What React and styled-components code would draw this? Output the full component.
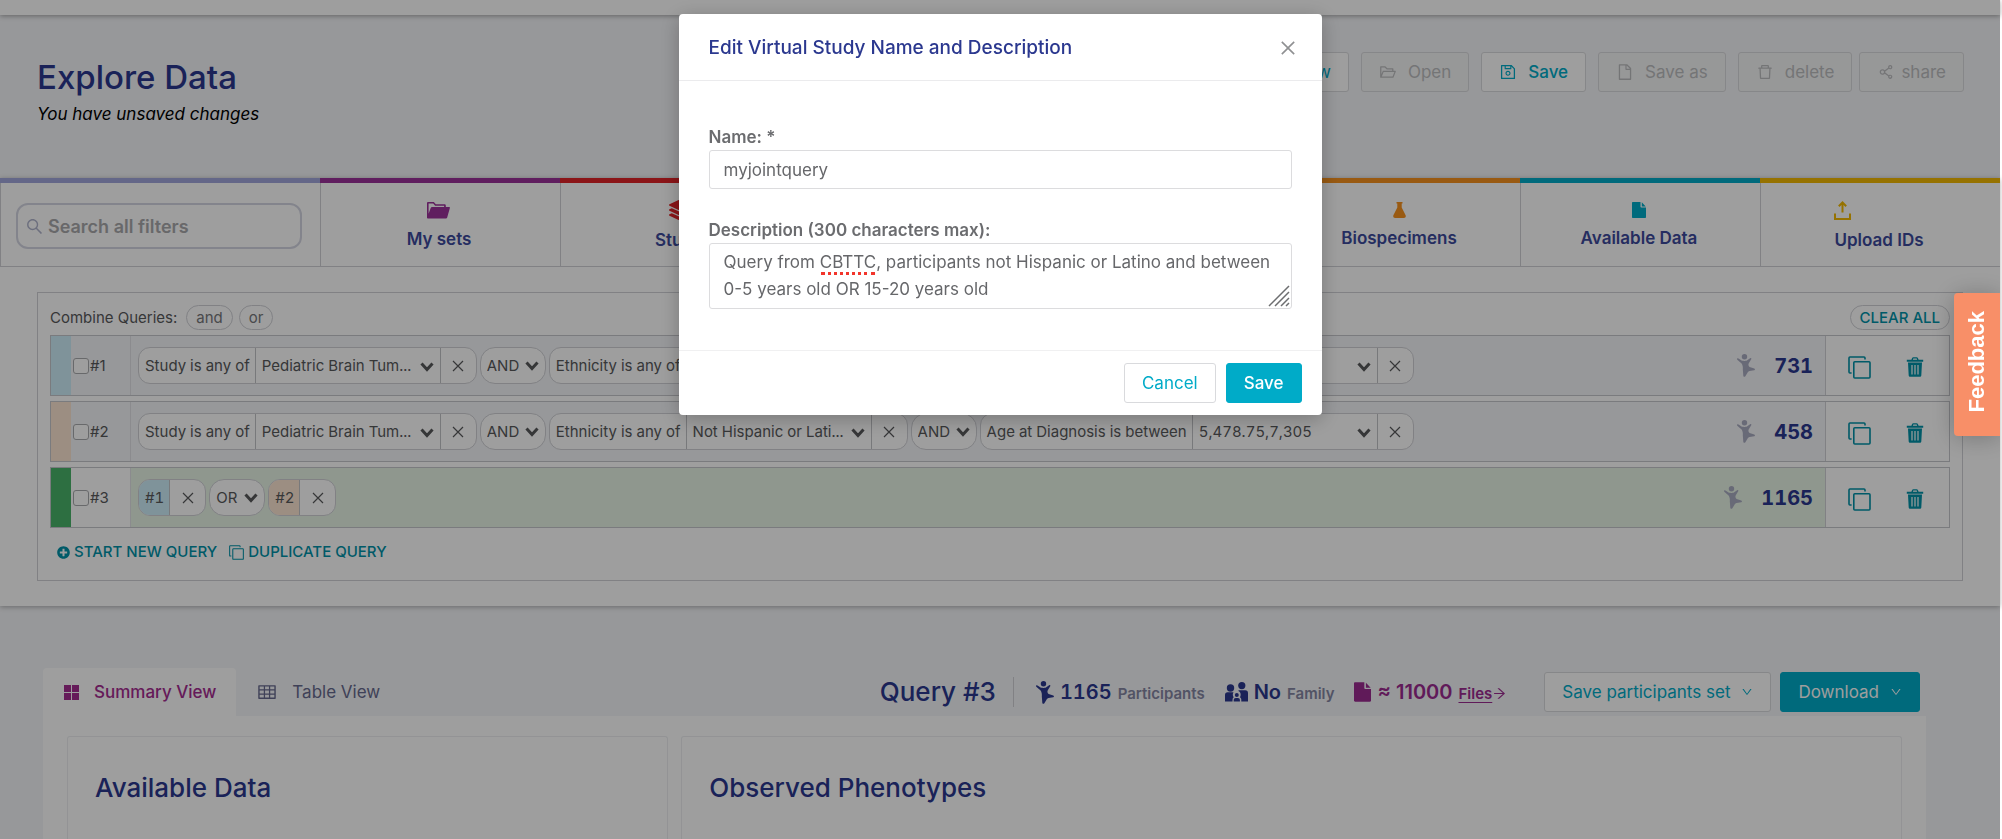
import React from "react";
import styled, { createGlobalStyle, css } from "styled-components";
import {
  AiOutlineFolderOpen,
  AiOutlineSave,
  AiOutlineFile,
  AiOutlineDelete,
  AiOutlineShareAlt,
  AiOutlineTable,
  AiOutlineArrowRight,
  AiOutlineDown,
  AiOutlineClose,
  AiOutlineSearch,
  AiOutlineFileAdd,
} from "react-icons/ai";
import { FaLayerGroup, FaPlusCircle, FaUser, FaHeartbeat } from "react-icons/fa";

const c = {
  navy: "#2b388f",
  teal: "#00abc8",
  tealDark: "#0092a8",
  purple: "#a42c90",
  bg: "#f4f5f8",
  line: "#d0d1d6",
  text: "#58595b",
};

const Global = createGlobalStyle`
  * { box-sizing: border-box; }
  body { margin: 0; background: #fff; font-family: Inter, "Liberation Sans", sans-serif; color: ${c.text}; }
  button, input, select, textarea { font: inherit; color: inherit; }
  h1, h2, h3, p { margin: 0; }
  svg { display: block; flex: none; }
`;

const Page = styled.div`
  min-height: 100vh;
  margin-right: 2px;
  background: ${c.bg};
  display: flex;
  flex-direction: column;
`;

const TopBar = styled.div`
  height: 15px;
  background: #fff;
  box-shadow: 0 1px 5px rgba(0, 0, 0, 0.35);
`;

const Header = styled.header`
  display: flex;
  justify-content: space-between;
  align-items: flex-start;
  padding: 37px 36px 0 37px;
  height: 163px;
`;

const PageTitle = styled.h1`
  font-size: 33px;
  line-height: 40px;
  padding-top: 5px;
  font-weight: 500;
  color: ${c.navy};
`;

const Unsaved = styled.p`
  font-size: 17px;
  line-height: 24px;
  padding-top: 5px;
  font-style: italic;
  color: #000;
`;

const Toolbar = styled.div`
  display: flex;
  gap: 12px;
`;

const Button = styled.button`
  display: inline-flex;
  align-items: center;
  justify-content: center;
  gap: ${(p) => (p.$tight ? "6px" : "11px")};
  height: 40px;
  padding: 0 17px;
  border: 1px solid ${(p) => (p.$primary ? c.teal : "#d9dadd")};
  border-radius: 3px;
  background: ${(p) => (p.$primary ? c.teal : "#fff")};
  color: ${(p) => (p.$primary ? "#fff" : c.teal)};
  font-size: 17px;
  line-height: 24px;
  font-weight: ${(p) => (p.$strong ? 500 : 400)};
  white-space: nowrap;
  &:disabled {
    background: #f4f5f6;
    color: #bcbdbf;
  }
`;

const PairGroup = styled.div`
  display: flex;
  gap: 7px;
`;

const Main = styled.section`
  background: #fff;
  box-shadow: 0 1px 5px rgba(0, 0, 0, 0.3);
  padding-bottom: 25px;
`;

const FilterBar = styled.nav`
  display: grid;
  grid-template-columns: minmax(0, 4fr) repeat(7, minmax(0, 3fr));
  border-bottom: 1px solid ${c.line};
`;

const FilterCell = styled.div`
  display: flex;
  align-items: center;
  justify-content: center;
  height: 88px;
  padding: 3px 18px 0 16px;
  border-top: 5px solid ${(p) => p.$color};
  box-shadow: inset 1px 0 0 ${c.line};
`;

const FilterButton = styled.button`
  display: flex;
  flex-direction: column;
  align-items: ${(p) => (p.$start ? "flex-start" : "center")};
  gap: 8px;
  padding: 0;
  border: 0;
  background: none;
  color: #3c4a9c;
  font-size: 17px;
  line-height: 24px;
  font-weight: 600;
  white-space: nowrap;
  svg {
    color: ${(p) => p.$color};
  }
`;

const SearchBox = styled.label`
  display: flex;
  align-items: center;
  gap: 4px;
  width: 100%;
  height: 46px;
  padding: 0 7px;
  border: 2px solid #d4d6e2;
  border-radius: 12px;
  color: #b0b4cc;
`;

const SearchInput = styled.input`
  flex: 1;
  min-width: 0;
  border: 0;
  outline: 0;
  background: none;
  padding: 0;
  font-size: 18px;
  font-weight: 600;
  &::placeholder {
    color: #a9a9ab;
    opacity: 1;
  }
`;

const Builder = styled.div`
  margin: 25px 37px 0;
  border: 1px solid ${c.line};
  padding: 12px 12px 17px;
`;

const BuilderTop = styled.div`
  display: flex;
  align-items: center;
  gap: 6px;
  margin-bottom: 5px;
  font-size: 15px;
  line-height: 20px;
`;

const CombineLabel = styled.span`
  margin-right: 3px;
`;

const Pill = styled.button`
  height: 25px;
  padding: 0 9px;
  border: 1px solid ${c.line};
  border-radius: 13px;
  background: #fff;
  font-size: 15px;
  line-height: 20px;
  color: ${(p) => (p.$teal ? c.tealDark : "#77787b")};
  font-weight: ${(p) => (p.$teal ? 500 : 400)};
  margin-left: ${(p) => (p.$teal ? "auto" : "0")};
`;

const Rows = styled.div`
  display: flex;
  flex-direction: column;
  gap: 5px;
`;

const Row = styled.div`
  display: flex;
  height: 61px;
  border: 1px solid #c6c7cc;
  background: ${(p) => (p.$active ? "#e7f4e6" : c.bg)};
`;

const Strip = styled.div`
  width: 20px;
  background: ${(p) => p.$color};
`;

const RowLabel = styled.label`
  display: flex;
  align-items: center;
  gap: 1px;
  width: 60px;
  padding-left: 2px;
  border-right: 1px solid #e0e1e5;
  background: ${(p) => (p.$active ? "#fff" : "transparent")};
  font-size: 15px;
`;

const Check = styled.input`
  appearance: none;
  width: 16px;
  height: 16px;
  margin: 0;
  border: 1px solid #a9aaad;
  border-radius: 3px;
  background: #fff;
`;

const Terms = styled.div`
  flex: 1;
  display: flex;
  align-items: center;
  gap: 3px;
  padding-left: 7px;
`;

const Chip = styled.div`
  display: flex;
  height: 37px;
  border: 1px solid ${c.line};
  border-radius: 12px;
  background: #fff;
  overflow: hidden;
  font-size: 15px;
  font-variant-numeric: tabular-nums;
`;

const ChipText = styled.span`
  display: flex;
  align-items: center;
  padding: 0 5px 0 6px;
  white-space: nowrap;
  background: ${(p) => p.$color || "transparent"};
`;

const ChipValue = styled.button`
  display: flex;
  align-items: center;
  justify-content: space-between;
  width: 185px;
  padding: 0 6px;
  border: 0;
  border-left: 1px solid #c2c3c7;
  background: none;
  white-space: nowrap;
  svg {
    margin-top: 3px;
  }
`;

const ChipClose = styled.button`
  display: flex;
  align-items: center;
  justify-content: center;
  width: 36px;
  padding: 0;
  border: 0;
  border-left: 1px solid #c2c3c7;
  background: none;
`;

const Operator = styled.div`
  display: grid;
  align-items: center;
  width: ${(p) => (p.$short ? "56px" : "66px")};
  height: 37px;
  border: 1px solid ${c.line};
  border-radius: 15px;
  background: #fff;
  font-size: 15px;
  svg {
    grid-area: 1 / 1;
    justify-self: end;
    margin-right: 6px;
    pointer-events: none;
  }
`;

const OperatorSelect = styled.select`
  grid-area: 1 / 1;
  appearance: none;
  height: 100%;
  width: 100%;
  padding: 0 0 0 6px;
  border: 0;
  background: none;
`;

const Count = styled.div`
  display: flex;
  align-items: center;
  gap: 19px;
  padding-right: 12px;
  font-size: 20px;
  font-weight: 700;
  font-variant-numeric: tabular-nums;
  color: ${c.navy};
  svg {
    color: #a9abc0;
  }
`;

const Actions = styled.div`
  display: flex;
  align-items: center;
  justify-content: space-between;
  width: 124px;
  padding: 3px 25px 0 22px;
  border-left: 1px solid ${c.line};
  background: #fff;
`;

const IconButton = styled.button`
  display: flex;
  padding: 0;
  border: 0;
  background: none;
  color: ${(p) => p.$color || c.tealDark};
`;

const BuilderFoot = styled.div`
  display: flex;
  gap: 12px;
  padding: 13px 7px 0;
`;

const TextButton = styled.button`
  display: flex;
  align-items: center;
  gap: 4px;
  padding: 0;
  border: 0;
  background: none;
  color: ${c.tealDark};
  font-size: 15px;
  line-height: 22px;
  font-weight: 500;
`;

const Results = styled.section`
  flex: 1;
  display: flex;
  flex-direction: column;
  margin: 62px 74px 0 43px;
`;

const ResultsBar = styled.div`
  display: flex;
  justify-content: space-between;
  height: 48px;
`;

const Tabs = styled.div`
  display: flex;
`;

const Tab = styled.button`
  display: flex;
  align-items: center;
  gap: 15px;
  height: 48px;
  padding: 0 20px 0 21px;
  border: 0;
  border-radius: 4px 4px 0 0;
  background: ${(p) => (p.$active ? "#fff" : "transparent")};
  color: ${(p) => (p.$active ? c.purple : "#66698e")};
  font-size: 17px;
  font-weight: ${(p) => (p.$active ? 500 : 400)};
`;

const Stats = styled.div`
  display: flex;
  align-items: center;
  height: 40px;
  margin: 4px 6px 0 0;
`;

const QueryName = styled.h2`
  font-size: 26px;
  line-height: 30px;
  font-weight: 500;
  color: ${c.navy};
  padding-right: 17px;
  margin-right: 22px;
  border-right: 1px solid ${c.line};
`;

const Stat = styled.div`
  display: flex;
  align-items: baseline;
  gap: 6px;
  margin-right: ${(p) => (p.$last ? "37px" : "20px")};
  color: ${(p) => (p.$purple ? "#9b2a90" : c.navy)};
  font-size: 20px;
  font-weight: 600;
  svg {
    align-self: center;
  }
`;

const StatNumber = styled.span`
  font-variant-numeric: tabular-nums;
`;

const StatUnit = styled.span`
  font-size: 15px;
  color: #8587a3;
`;

const FilesLink = styled.a`
  display: flex;
  align-items: center;
  color: inherit;
  font-size: 15px;
  text-decoration: none;
  span {
    text-decoration: underline;
    text-underline-offset: 3px;
  }
`;

const ResultButtons = styled.div`
  display: flex;
  gap: 9px;
`;

const Panel = styled.div`
  flex: 1;
  display: grid;
  grid-template-columns: 33fr 67fr;
  gap: 13px;
  padding: 20px 24px 0;
  background: #fff;
`;

const Card = styled.div`
  border: 1px solid #edeef1;
  border-bottom: 0;
  border-radius: 3px 3px 0 0;
  padding: 33px 27px 20px;
`;

const CardTitle = styled.h3`
  font-size: 26px;
  line-height: 36px;
  font-weight: 500;
  color: ${c.navy};
`;

const Mask = styled.div`
  position: fixed;
  inset: 0 2px 0 0;
  padding-top: 14px;
  background: rgba(0, 0, 0, 0.38);
`;

const Modal = styled.form`
  width: 643px;
  max-width: 100%;
  margin: 0 auto;
  border-radius: 4px;
  background: #fff;
  box-shadow: 0 4px 20px rgba(0, 0, 0, 0.25);
`;

const ModalHead = styled.div`
  display: flex;
  align-items: center;
  justify-content: space-between;
  height: 67px;
  padding: 1px 24px 0 30px;
  border-bottom: 1px solid #ebebed;
`;

const ModalTitle = styled.h2`
  font-size: 19px;
  line-height: 28px;
  font-weight: 500;
  color: ${c.navy};
`;

const ModalBody = styled.div`
  display: flex;
  flex-direction: column;
  gap: 29px;
  padding: 44px 30px 41px;
`;

const Field = styled.label`
  display: flex;
  flex-direction: column;
  font-size: 17px;
  line-height: 25px;
`;

const FieldName = styled.span`
  font-weight: 600;
  color: #6b6c6f;
`;

const fieldBox = css`
  width: 100%;
  display: block;
  border: 1px solid #dcdcde;
  border-radius: 3px;
  background: #fff;
  color: #66676a;
  outline: 0;
  padding: 5px 14px;
  font-size: 17px;
  line-height: 27px;
`;

const TextInput = styled.input`
  ${fieldBox}
  height: 39px;
`;

const AreaWrap = styled.span`
  position: relative;
  display: block;
`;

const TextArea = styled.textarea`
  ${fieldBox}
  height: 66px;
  resize: none;
  overflow: hidden;
`;

const SpellMark = styled.span`
  position: absolute;
  left: 112px;
  top: 29px;
  width: 54px;
  border-bottom: 3px dotted #f2352b;
`;

const Grip = styled.svg`
  position: absolute;
  right: 2px;
  bottom: 2px;
`;

const ModalFoot = styled.div`
  display: flex;
  justify-content: flex-end;
  gap: 10px;
  padding: 12px 20px;
  border-top: 1px solid #f0f0f1;
`;

const Feedback = styled.button`
  position: fixed;
  top: 293px;
  right: 2px;
  width: 46px;
  height: 143px;
  border: 0;
  border-radius: 4px 0 0 4px;
  background: #f88f68;
  color: #fff;
  font-family: "Liberation Sans", sans-serif;
  font-size: 22px;
  font-weight: 700;
  box-shadow: 0 2px 24px rgba(0, 0, 0, 0.25);
  clip-path: inset(-30px 0 -30px -30px);
  span {
    writing-mode: vertical-rl;
    transform: rotate(180deg);
  }
`;

const Chevron = () => (
  <svg width="14" height="10" viewBox="0 0 14 10" fill="none" stroke="currentColor" strokeWidth="3">
    <path d="M1.5 1.5 7 7.5l5.5-6" />
  </svg>
);

const Cross = () => (
  <svg width="12" height="12" viewBox="0 0 12 12" fill="none" stroke="currentColor" strokeWidth="1.2">
    <path d="M1 1l10 10M11 1 1 11" />
  </svg>
);

const Kid = () => (
  <svg width="18" height="23" viewBox="0 0 18 23" fill="currentColor">
    <circle cx="7.5" cy="2.8" r="2.700" />
    <path d="M.2 4.600c.5-.6 1.200-.3 1.700.1l2.700 1.900c.8.500 4.300.5 5.300-.1l3.200-2.300c.8-.5 1.700.3 1.100 1.100l-2.400 3.900c-.7 1.300-.4 2.900.8 3.900l4.700 1.500c.9.400.9 1.500-.1 1.700l-4.600.7c-1.200.4-2 1.200-2.400 2.300l-2 3.100c-.6.8-1.900.4-1.900-.6l-.5-6.600c.2-2.200-.1-4.200-1.200-5.800L.3 5.800C0 5.400-.1 5 .2 4.600z" />
  </svg>
);

const Copy = ({ size = 23 }) => (
  <svg width={size} height={size} viewBox="0 0 23 23" fill="none" stroke="currentColor" strokeWidth="1.600">
    <rect x="5.800" y="5.800" width="16.200" height="16.200" rx="1" />
    <path d="M3.600 17H2a1 1 0 0 1-1-1V2a1 1 0 0 1 1-1h14a1 1 0 0 1 1 1v1.600" />
  </svg>
);

const Trash = () => (
  <svg width="18" height="20" viewBox="0 0 18 20">
    <path
      fill="currentColor"
      fillRule="evenodd"
      d="M6 1.200C6.300.5 6.700.2 7.300.2h3.400c.6 0 1 .3 1.300 1l.6 1.600h4.600v1.900H.8V2.800h4.600zm1.300.4-.4 1.200h4.200l-.4-1.200zM2 5.600h14l-.7 12.800c-.1.900-.7 1.400-1.500 1.400H4.200c-.8 0-1.400-.5-1.500-1.400zM5.400 8v9.500h1.200V8zm3 0v9.500h1.200V8zm3 0v9.500h1.200V8z"
    />
  </svg>
);

const FolderSolid = () => (
  <svg width="23" height="17" viewBox="0 0 23 17">
    <path
      fill="currentColor"
      fillRule="evenodd"
      d="M0 1.200C0 .4.500 0 1.200 0h5.600l2 2.200h8.500c.9 0 1.500.5 1.500 1.300V5H22c.8 0 1 .6.8 1.200l-2.600 9.400c-.2.700-.6 1-1.300 1H1.200c-.8 0-1.200-.5-1.200-1.200zM1.600 1.600v10.200L3.700 6c.3-.7.7-1 1.400-1h12V3.800h-9L6.200 1.600z"
    />
  </svg>
);

const Flask = () => (
  <svg width="13" height="16" viewBox="0 0 13 16">
    <path fill="currentColor" d="M3.500 0h6v1.400h-.8v4.200l3.800 7.500c.7 1.600 0 2.900-1.600 2.900H2.100C.500 16-.2 14.700.500 13.100l3.800-7.500V1.400h-.8z" />
  </svg>
);

const FileSolid = ({ w = 14, h = 16 }) => (
  <svg width={w} height={h} viewBox="0 0 14 16">
    <path fill="currentColor" d="M1 0h7.500v4.800c0 .5.300.8.800.8H14V15c0 .6-.4 1-1 1H1c-.6 0-1-.4-1-1V1c0-.6.4-1 1-1zM9.800.3 13.700 4.400H9.800z" />
  </svg>
);

const Upload = () => (
  <svg width="17" height="19" viewBox="0 0 17 19" fill="none" stroke="currentColor" strokeWidth="2">
    <path d="M1 12.500V18h15v-5.500M8.500 11.500V1.700M4.800 5.200l3.700-3.700 3.700 3.700" />
  </svg>
);

const Squares = () => (
  <svg width="15" height="15" viewBox="0 0 15 15" fill="currentColor">
    <path d="M0 0h7v7H0zM8 0h7v7H8zM0 8h7v7H0zM8 8h7v7H8z" />
  </svg>
);

const Family = () => (
  <svg width="23" height="20" viewBox="0 0 23 20" fill="currentColor">
    <circle cx="5.500" cy="6" r="3.700" />
    <circle cx="16.800" cy="3.600" r="3.600" />
    <circle cx="11.800" cy="13" r="2" />
    <path d="M0 19.500V13c0-1.700 1-2.700 2.500-2.700h6c-.9 1.500-1 3.600.2 5-.8.600-1.200 1.500-1.200 2.600v1.600zM13.500 8.300h6.800c1.700 0 2.700 1.100 2.700 2.700v8.500h-6.700v-1.700c0-1.100-.5-2-1.300-2.600 1.400-2.300.6-5.200-1.500-6.200zM8.700 19.500v-1.600c0-1.200.9-2 2-2h2.200c1.200 0 2 .8 2 2v1.600z" />
  </svg>
);

const FILTERS = [
  { label: "My sets", color: "#9b3199", icon: <FolderSolid /> },
  { label: "Study", color: "#e02227", icon: <FaLayerGroup size={20} /> },
  { label: "Demographic", color: "#2b388f", icon: <FaUser size={16} /> },
  { label: "Clinical", color: "#4ab36b", icon: <FaHeartbeat size={16} /> },
  { label: "Biospecimens", color: "#f7921e", icon: <Flask /> },
  { label: "Available Data", color: "#00abc8", icon: <FileSolid /> },
  { label: "Upload IDs", color: "#f2b900", icon: <Upload />, start: true },
];

const QUERIES = [
  { id: "#1", color: "#ceedf9", count: "731", age: "0,1,826.25" },
  { id: "#2", color: "#fce5d2", count: "458", age: "5,478.75,7,305" },
];

function Term({ field, value }) {
  return (
    <Chip>
      <ChipText>{field}</ChipText>
      <ChipValue type="button" aria-haspopup="listbox">
        {value}
        <Chevron />
      </ChipValue>
      <ChipClose type="button" aria-label={`Remove ${field}`}>
        <Cross />
      </ChipClose>
    </Chip>
  );
}

function Op({ value }) {
  return (
    <Operator $short={value === "OR"}>
      <OperatorSelect aria-label="Operator" defaultValue={value}>
        <option>AND</option>
        <option>OR</option>
      </OperatorSelect>
      <Chevron />
    </Operator>
  );
}

function QueryRow({ id, color, count, active, children }) {
  return (
    <Row $active={active}>
      <Strip $color={color} />
      <RowLabel $active={active}>
        <Check type="checkbox" />
        {id}
      </RowLabel>
      <Terms>{children}</Terms>
      <Count>
        <Kid />
        {count}
      </Count>
      <Actions>
        <IconButton type="button" aria-label={`Duplicate ${id}`}>
          <Copy />
        </IconButton>
        <IconButton type="button" aria-label={`Delete ${id}`}>
          <Trash />
        </IconButton>
      </Actions>
    </Row>
  );
}

function RefChip({ id, color }) {
  return (
    <Chip>
      <ChipText $color={color}>{id}</ChipText>
      <ChipClose type="button" aria-label={`Remove ${id}`}>
        <Cross />
      </ChipClose>
    </Chip>
  );
}

function EditDialog() {
  return (
    <Mask>
      <Modal role="dialog" aria-labelledby="dialog-title" onSubmit={(e) => e.preventDefault()}>
        <ModalHead>
          <ModalTitle id="dialog-title">Edit Virtual Study Name and Description</ModalTitle>
          <IconButton type="button" aria-label="Close" $color="#8f9092">
            <AiOutlineClose size={20} />
          </IconButton>
        </ModalHead>
        <ModalBody>
          <Field>
            <FieldName>Name: *</FieldName>
            <TextInput defaultValue="myjointquery" />
          </Field>
          <Field>
            <FieldName>Description (300 characters max):</FieldName>
            <AreaWrap>
              <TextArea
                spellCheck={false}
                defaultValue="Query from CBTTC, participants not Hispanic or Latino and between 0-5 years old OR 15-20 years old"
              />
              <SpellMark />
              <Grip width="22" height="22" viewBox="0 0 22 22" fill="none" stroke="#6d6e70" strokeWidth="1.500">
                <path d="M1 21 21 1M7 21 21 7M13 21l8-8M18 21l3-3" />
              </Grip>
            </AreaWrap>
          </Field>
        </ModalBody>
        <ModalFoot>
          <Button type="button">Cancel</Button>
          <Button type="submit" $primary $strong>
            Save
          </Button>
        </ModalFoot>
      </Modal>
    </Mask>
  );
}

export default function App() {
  return (
    <>
      <Global />
      <Page>
        <TopBar />
        <Header>
          <div>
            <PageTitle>Explore Data</PageTitle>
            <Unsaved>You have unsaved changes</Unsaved>
          </div>
          <Toolbar>
            <Button type="button">
              <AiOutlineFileAdd size={18} />
              New
            </Button>
            <Button type="button" disabled>
              <AiOutlineFolderOpen size={18} />
              Open
            </Button>
            <Button type="button" $strong>
              <AiOutlineSave size={18} />
              Save
            </Button>
            <Button type="button" disabled>
              <AiOutlineFile size={18} />
              Save as
            </Button>
            <PairGroup>
              <Button type="button" disabled>
                <AiOutlineDelete size={18} />
                delete
              </Button>
              <Button type="button" disabled $tight>
                <AiOutlineShareAlt size={18} />
                share
              </Button>
            </PairGroup>
          </Toolbar>
        </Header>

        <Main>
          <FilterBar>
            <FilterCell $color="#a2a7dc">
              <SearchBox>
                <AiOutlineSearch size={19} />
                <SearchInput type="search" placeholder="Search all filters" aria-label="Search all filters" />
              </SearchBox>
            </FilterCell>
            {FILTERS.map((f) => (
              <FilterCell key={f.label} $color={f.color}>
                <FilterButton type="button" $color={f.color} $start={f.start}>
                  {f.icon}
                  {f.label}
                </FilterButton>
              </FilterCell>
            ))}
          </FilterBar>

          <Builder>
            <BuilderTop>
              <CombineLabel>Combine Queries:</CombineLabel>
              <Pill type="button">and</Pill>
              <Pill type="button">or</Pill>
              <Pill type="button" $teal>
                CLEAR ALL
              </Pill>
            </BuilderTop>
            <Rows>
              {QUERIES.map((q) => (
                <QueryRow key={q.id} {...q}>
                  <Term field="Study is any of" value="Pediatric Brain Tum..." />
                  <Op value="AND" />
                  <Term field="Ethnicity is any of" value="Not Hispanic or Lati..." />
                  <Op value="AND" />
                  <Term field="Age at Diagnosis is between" value={q.age} />
                </QueryRow>
              ))}
              <QueryRow id="#3" color="#49b369" count="1165" active>
                <RefChip id="#1" color="#ceedf9" />
                <Op value="OR" />
                <RefChip id="#2" color="#fce5d2" />
              </QueryRow>
            </Rows>
            <BuilderFoot>
              <TextButton type="button">
                <FaPlusCircle size={13} />
                START NEW QUERY
              </TextButton>
              <TextButton type="button">
                <Copy size={15} />
                DUPLICATE QUERY
              </TextButton>
            </BuilderFoot>
          </Builder>
        </Main>

        <Results>
          <ResultsBar>
            <Tabs>
              <Tab type="button" $active>
                <Squares />
                Summary View
              </Tab>
              <Tab type="button">
                <AiOutlineTable size={20} />
                Table View
              </Tab>
            </Tabs>
            <Stats>
              <QueryName>Query #3</QueryName>
              <Stat>
                <Kid />
                <StatNumber>1165</StatNumber>
                <StatUnit>Participants</StatUnit>
              </Stat>
              <Stat>
                <Family />
                No <StatUnit>Family</StatUnit>
              </Stat>
              <Stat $purple $last>
                <FileSolid w={17} h={20} />
                ≈ 11000
                <FilesLink href="#files">
                  <span>Files</span>
                  <AiOutlineArrowRight size={15} />
                </FilesLink>
              </Stat>
              <ResultButtons>
                <Button type="button">
                  Save participants set
                  <AiOutlineDown size={12} />
                </Button>
                <Button type="button" $primary>
                  Download
                  <AiOutlineDown size={12} />
                </Button>
              </ResultButtons>
            </Stats>
          </ResultsBar>
          <Panel>
            <Card>
              <CardTitle>Available Data</CardTitle>
            </Card>
            <Card>
              <CardTitle>Observed Phenotypes</CardTitle>
            </Card>
          </Panel>
        </Results>
      </Page>
      <EditDialog />
      <Feedback type="button">
        <span>Feedback</span>
      </Feedback>
    </>
  );
}
